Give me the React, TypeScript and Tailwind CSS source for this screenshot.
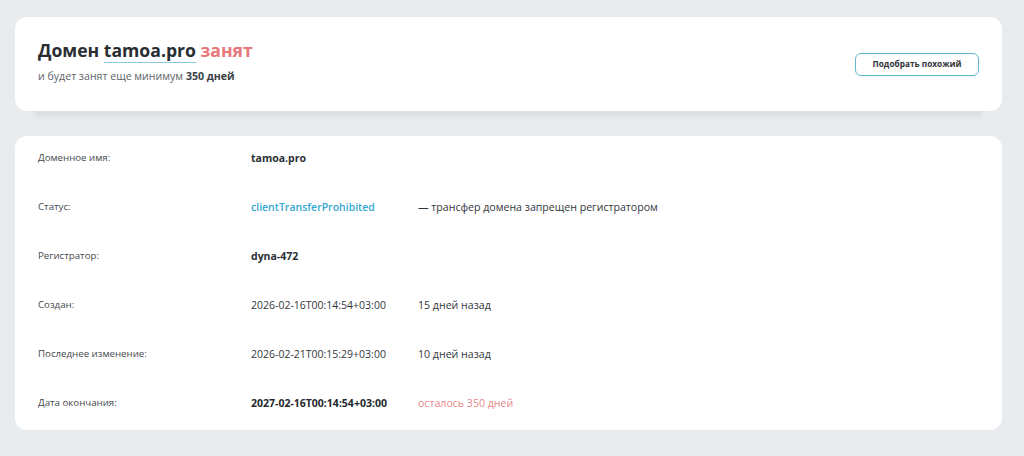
import React from 'react';

interface Row {
  label: string;
  value: string;
  note?: string;
  kind?: 'bold' | 'link' | 'plain' | 'strong';
  noteTone?: 'plain' | 'red';
}

const rows: Row[] = [
  { label: 'Доменное имя:', value: 'tamoa.pro', kind: 'bold' },
  { label: 'Статус:', value: 'clientTransferProhibited', kind: 'link', note: '— трансфер домена запрещен регистратором' },
  { label: 'Регистратор:', value: 'dyna-472', kind: 'bold' },
  { label: 'Создан:', value: '2026-02-16T00:14:54+03:00', kind: 'plain', note: '15 дней назад' },
  { label: 'Последнее изменение:', value: '2026-02-21T00:15:29+03:00', kind: 'plain', note: '10 дней назад' },
  { label: 'Дата окончания:', value: '2027-02-16T00:14:54+03:00', kind: 'strong', note: 'осталось 350 дней', noteTone: 'red' },
];

const valueClass = (kind: Row['kind']) => {
  if (kind === 'link') return 'font-semibold text-[#36a8d3]';
  if (kind === 'bold') return 'font-bold text-[#2b2f33]';
  if (kind === 'strong') return 'font-bold text-[#25292d]';
  return 'text-[#33373b]';
};

export default function App() {
  return (
    <div className="min-h-[456px] bg-[#e9ecef] pl-[15px] pr-[22px] pt-[17px] pb-[26px] font-['Open_Sans',sans-serif]">
      <div className="flex h-[94px] items-center justify-between rounded-[12px] bg-white pl-[23px] pr-[23px] shadow-[0_26px_4px_-20px_rgba(40,50,60,0.07)]">
        <div className="pb-[7px]">
          <h1 className="text-[17.6px] font-bold leading-[24px] text-[#2a2e33]">
            Домен{' '}
            <span className="border-b border-[#86c9e3]">tamoa.pro</span>{' '}
            <span className="text-[#e8777b]">занят</span>
          </h1>
          <p className="mt-[7px] text-[10.6px] leading-[14px] text-[#5d6368]">
            и будет занят еще минимум <span className="font-bold text-[#3a4147]">350 дней</span>
          </p>
        </div>
        <button className="h-[23px] w-[124px] rounded-[6px] border border-[#62b9cd] text-[8.3px] font-bold text-[#2f3439]">
          Подобрать похожий
        </button>
      </div>

      <div className="mt-[25px] flex flex-col gap-[35px] rounded-[12px] bg-white pt-[15px] pb-[20px] pl-[23px]">
        {rows.map((r) => (
          <div key={r.label} className="flex h-[14px] items-center leading-[14px]">
            <div className="w-[213px] text-[9.7px] text-[#45494d]">{r.label}</div>
            <div className={`w-[167px] text-[10.5px] ${valueClass(r.kind)}`}>{r.value}</div>
            {r.note && (
              <div className={`text-[10.6px] ${r.noteTone === 'red' ? 'text-[#e8878b]' : 'text-[#33373b]'}`}>
                {r.note}
              </div>
            )}
          </div>
        ))}
      </div>
    </div>
  );
}
